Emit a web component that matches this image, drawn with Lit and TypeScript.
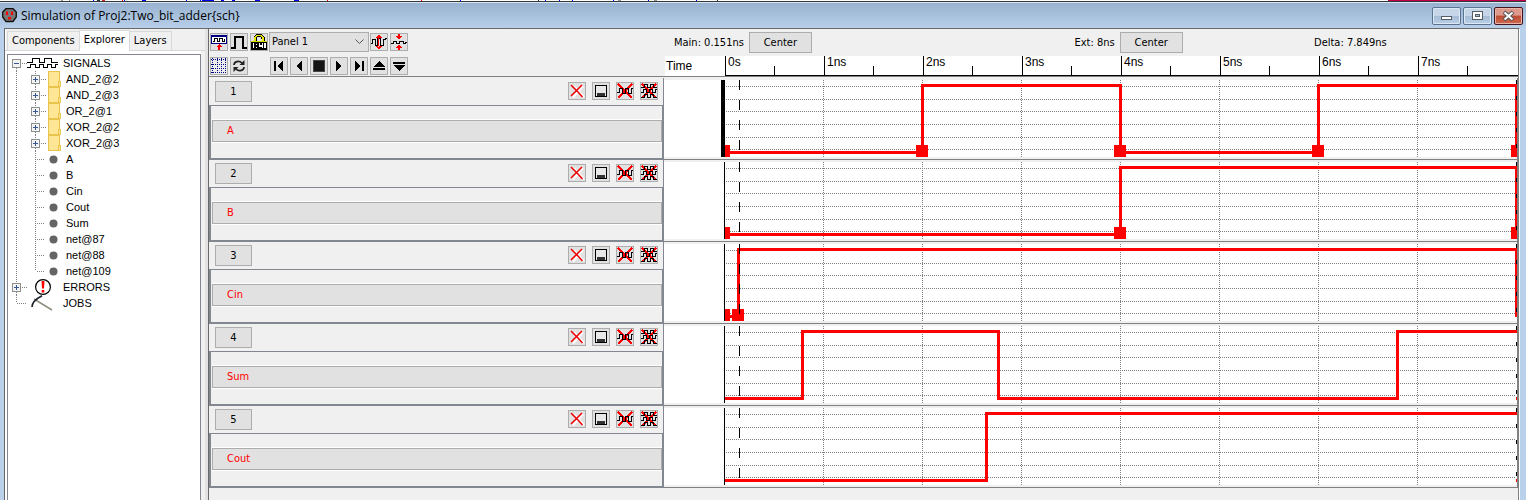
import { LitElement, html, svg, css, nothing, TemplateResult } from "lit";
import { customElement, property, state } from "lit/decorators.js";

const NS = 99;
const AXIS = 60;
const HIGH = 5.5;
const LOW = 72.5;

interface Signal {
  name: string;
  start: 0 | 1;
  edges: number[];
  handles: boolean;
  endEdge: boolean;
}

const SIGNALS: Signal[] = [
  { name: "A", start: 0, edges: [2, 4, 6], handles: true, endEdge: true },
  { name: "B", start: 0, edges: [4], handles: true, endEdge: true },
  { name: "Cin", start: 0, edges: [0.14], handles: true, endEdge: true },
  { name: "Sum", start: 0, edges: [0.79, 2.77, 6.8], handles: false, endEdge: false },
  { name: "Cout", start: 0, edges: [2.65], handles: false, endEdge: false },
];

const at = (t: number) => AXIS + Math.round(t * NS);

/* ---------- 16x16 toolbar glyphs ---------- */
const wave = "M0 9.5H2.5V5.5H5.5V10.5H8.5V5.5H11.5V10.5H14.5V5.5H16";
const glyphs: Record<string, TemplateResult> = {
  addSignal: svg`<rect x=".5" y="1.5" width="15" height="8" fill="#fff" stroke="#000080"/><path d="M1 2.500H15" stroke="#000080"/><path d="M2 7.500H3.500V4.500H6.500V7.500H8.500V4.500H11.500V7.500H13.500V4.500" fill="none" stroke="#000"/><path d="M8 10L11 13H9V16H7V13H5Z" fill="#f00"/>`,
  pulse: svg`<path d="M0 14H4V3H12V14H16" fill="none" stroke="#000" stroke-width="2"/>`,
  lock: svg`<path d="M4 8V4L6 1.500H10L12 4V8" fill="none" stroke="#000" stroke-width="3"/><path d="M4 7V4L6 1.500H10L12 4V7" fill="none" stroke="#e8e800" stroke-width="1.500"/><rect x="0" y="7" width="16" height="9" fill="#000"/><path d="M2.500 9V14M5.500 9.500V10.500M5.500 12.500V13.500M8.500 9V12H11M11.500 9V14M14 9V14" stroke="#fff" stroke-width="1.200" fill="none"/><path d="M0 7.500H16" stroke="#d8d800"/>`,
  expand: svg`<path d="M0 9.500H1.500V5.500H4.500V11.500H6.500V4.500H9.500V11.500H12.500V5.500H14.500V4.500H16" fill="none" stroke="#000"/><path d="M8 0L11 4H5ZM8 16L11 12H5ZM7 3H8V13H7Z" fill="#f00"/>`,
  shrink: svg`<path d="M0 9.500H2.500V7.500H5.500V9.500H8.500V7.500H12.500V9.500H14.500V8.500H16" fill="none" stroke="#000"/><path d="M7 0H9V2H11L8 5.500L5 2H7ZM8 10.500L11 14H9V16H7V14H5Z" fill="#f00"/>`,
  grid: svg`<rect x="0" y="0" width="16" height="16" fill="#fff" fill-opacity=".4"/><path d="M0 1.500H16M0 6.500H16M0 10.500H16M0 14.500H16M1.500 0V16M6.500 0V16M10.500 0V16M14.500 0V16" stroke="#000080" stroke-dasharray="1 1"/>`,
  refresh: svg`<path d="M3 7C3 3.500 8 2 11 5M13 9C13 12.500 8 14 5 11" fill="none" stroke="#222" stroke-width="1.700"/><path d="M13.500 2V7H8.500ZM2.500 14V9H7.500Z" fill="#222"/>`,
  first: svg`<rect x="3" y="3" width="2" height="10"/><path d="M12 3V13L6 8Z"/>`,
  back: svg`<path d="M11 3V13L5 8Z"/>`,
  stop: svg`<rect x="2.500" y="2.500" width="11" height="11" fill="#151515" stroke="#444"/>`,
  play: svg`<path d="M5 3V13L11 8Z"/>`,
  last: svg`<rect x="11" y="3" width="2" height="10"/><path d="M4 3V13L10 8Z"/>`,
  faster: svg`<path d="M8 3L14 9H2Z"/><rect x="2" y="10" width="12" height="2"/>`,
  slower: svg`<path d="M8 13L14 7H2Z"/><rect x="2" y="4" width="12" height="2"/>`,
  close: svg`<path d="M5 3.500L15 14M14 3L4 14.500" stroke="#fff" stroke-width="2"/><path d="M2 2L9 9L13.500 14M13 2L8 7L2 13" stroke="#e00" stroke-width="1.500" fill="none"/>`,
  minimize: svg`<rect x="2.500" y="2.500" width="11" height="11" fill="#e8e8e8" stroke="#000"/><rect x="4" y="10" width="8" height="3" fill="#333"/>`,
  remove: svg`<path d="M1 1L15 15M15 1L1 15" stroke="#f00" stroke-width="1.800"/><path d="${wave}" fill="none" stroke="#000"/>`,
  removeAll: svg`<path d="M1 1L15 15M15 1L1 15" stroke="#f00" stroke-width="2"/><path d="M0 4.500H3.500V1.500H6.500V4.500H9.500V1.500H12.500V4.500H16M0 9.500H2.500V6.500H5.500V9.500H8.500V6.500H11.500V9.500H14.500V6.500H16M0 14.500H3.500V11.500H6.500V14.500H9.500V11.500H12.500V14.500H16" fill="none" stroke="#000"/>`,
};

const smooth = new Set(["refresh", "close"]);
const glyph = (name: string) => html`<svg
  class="glyph"
  width="16"
  height="16"
  viewBox="0 0 16 16"
  shape-rendering=${smooth.has(name) ? "auto" : "crispEdges"}
  aria-hidden="true"
>${glyphs[name]}</svg>`;

const buttonStyles = css`
  button,
  select {
    box-sizing: border-box;
    margin: 0;
    padding: 0;
    font: inherit;
    color: #000;
    background: #e1e1e1;
    border: 1px solid #adadad;
    border-radius: 0;
  }
  .icon {
    width: 18px;
    height: 18px;
    flex: none;
    overflow: hidden;
  }
  .glyph {
    display: block;
  }
`;

/* ---------- explorer tree ---------- */
type Kind = "group" | "leaf" | "errors" | "jobs" | "signals";
interface Node {
  label: string;
  kind: Kind;
  last?: boolean;
}
const TREE: Node[] = [
  { label: "SIGNALS", kind: "signals" },
  ...["AND_2@2", "AND_2@3", "OR_2@1", "XOR_2@2", "XOR_2@3"].map((label) => ({ label, kind: "group" as Kind })),
  ...["A", "B", "Cin", "Cout", "Sum", "net@87", "net@88", "net@109"].map((label, i) => ({
    label,
    kind: "leaf" as Kind,
    last: i === 7,
  })),
  { label: "ERRORS", kind: "errors" },
  { label: "JOBS", kind: "jobs" },
];

@customElement("signal-explorer")
export class SignalExplorer extends LitElement {
  static styles = [
    buttonStyles,
    css`
      :host {
        display: flex;
        flex-direction: column;
        font: 11px/14px "DejaVu Sans Condensed", "Noto Sans", sans-serif;
        background: #f0f0f0;
      }
      .tabs {
        display: flex;
        align-items: flex-end;
        height: 22px;
        padding-left: 2px;
        border-bottom: 1px solid #d9d9d9;
        box-sizing: border-box;
      }
      .tab {
        height: 19px;
        border-color: #d9d9d9;
        border-bottom: 0;
        background: #f0f0f0;
        padding: 0 4px;
        white-space: nowrap;
      }
      .tab:first-child {
        border-right: 0;
      }
      .tab:last-child {
        border-left: 0;
      }
      .tab.active {
        height: 21px;
        margin-bottom: -1px;
        padding-bottom: 2px;
        background: #fff;
        z-index: 1;
      }
      .pane {
        flex: 1;
        display: flex;
        background: #fff;
        padding: 3px 0 0 2px;
        margin-right: 4px;
      }
      .tree {
        flex: 1;
        margin: 0;
        padding: 0;
        list-style: none;
        border: 1px solid #828790;
        border-bottom: 0;
        font: 11px/16px "Liberation Sans", Arial, sans-serif;
      }
      .row {
        display: flex;
        height: 16px;
      }
      .toggle {
        width: 9px;
        height: 16px;
        border: 0;
        background: none;
      }
      svg {
        display: block;
        flex: none;
      }
      .label {
        padding-left: 5px;
        white-space: nowrap;
      }
    `,
  ];

  private toggle(open: boolean, above: boolean) {
    return html`<button class="toggle" aria-label=${open ? "Collapse" : "Expand"}>
      <svg width="9" height="16" shape-rendering="crispEdges">
        ${above ? svg`<path d="M4.500 0V4" stroke="#808080" stroke-dasharray="1 1" />` : nothing}
        ${open || above ? svg`<path d="M4.500 13V16" stroke="#808080" stroke-dasharray="1 1" />` : nothing}
        <rect x=".5" y="4.500" width="8" height="8" fill="#f4f4f4" stroke="#8e8f8f" />
        <path d=${open ? "M2 8.500H7" : "M2 8.500H7M4.500 6V11"} stroke="#3a5795" />
      </svg>
    </button>`;
  }

  private row(n: Node) {
    const dots = (d: string) => svg`<path d="${d}" stroke="#808080" stroke-dasharray="1 1" fill="none"/>`;
    switch (n.kind) {
      case "signals":
        return html`<svg width="4" height="16"></svg>${this.toggle(true, false)}
          <svg width="37" height="16" shape-rendering="crispEdges">
            ${dots("M1 8.500H6")}
            <path d="M6 7.500H11.500V3.500H18.500V7.500H23.500V3.500H30.500V7.500H37M6 12.500H9.500V9.500H14.500V12.500H18.500V9.500H22.500V12.500H26.500V9.500H30.500V12.500H34.500V9.500H37" fill="none" stroke="#000" />
          </svg>`;
      case "group":
        return html`<svg width="23" height="16" shape-rendering="crispEdges">${dots("M8.500 0V16")}</svg
          >${this.toggle(false, true)}
          <svg width="21" height="16" shape-rendering="crispEdges">
            ${dots("M1 8.500H6")}
            <rect x="8.500" y=".5" width="11" height="15" fill="#ffe694" stroke="#e8c44c" />
            <path d="M18.500 10.500H20.500V15.500H18.500Z" fill="#ffe694" stroke="#e8c44c" />
          </svg>`;
      case "leaf":
        return html`<svg width="53" height="16">
          ${dots(n.last ? "M27.500 0V8" : "M27.500 0V16")}${dots("M8.500 0V16")}${dots("M29 8.500H37")}
          <circle cx="45.500" cy="8.500" r="4" fill="#646464" />
        </svg>`;
      case "errors":
        return html`<svg width="4" height="16"></svg>${this.toggle(false, true)}
          <svg width="37" height="16">
            ${dots("M1 8.500H6")}
            <circle cx="22" cy="8" r="7.400" fill="#fff" stroke="#000" stroke-width="1.200" />
            <path d="M20.500 2H23.500L23 9.500H21ZM20.700 11H23.300V13.500H20.700Z" fill="#f00" />
          </svg>`;
      default:
        return html`<svg width="50" height="16">
          ${dots("M8.500 0V8")}${dots("M9 8.500H19")}
          <path d="M26 4L44 15" stroke="#8f8f80" stroke-width="1.500" />
          <path d="M24 12Q24 6 34 .8" fill="none" stroke="#18202a" stroke-width="1.600" />
        </svg>`;
    }
  }

  render() {
    return html`<div class="tabs" role="tablist">
        <button class="tab" role="tab" aria-selected="false">Components</button>
        <button class="tab active" role="tab" aria-selected="true">Explorer</button>
        <button class="tab" role="tab" aria-selected="false">Layers</button>
      </div>
      <div class="pane">
        <ul class="tree">
          ${TREE.map((n) => html`<li class="row">${this.row(n)}<span class="label">${n.label}</span></li>`)}
        </ul>
      </div>`;
  }
}

/* ---------- one waveform panel ---------- */
@customElement("wave-panel")
export class WavePanel extends LitElement {
  @property({ type: Number }) index = 1;
  @property({ attribute: false }) signal!: Signal;

  static styles = [
    buttonStyles,
    css`
      :host {
        display: grid;
        grid-template-columns: 455px 1fr;
        height: 82px;
        box-sizing: border-box;
        font: 11px/14px "DejaVu Sans Condensed", "Noto Sans", sans-serif;
      }
      .side {
        display: flex;
        flex-direction: column;
        border-right: 1px solid #828790;
      }
      .head {
        display: flex;
        gap: 6px;
        height: 27px;
        padding: 3px 5px 0 6px;
        box-sizing: border-box;
      }
      .number {
        width: 37px;
        height: 21px;
        margin-right: auto;
      }
      .head .icon {
        margin-top: 1px;
      }
      .body {
        flex: 1;
        padding: 14px 0 0 1px;
        border: 1px solid #828790;
        border-width: 1px 1px 2px 2px;
      }
      .name {
        display: block;
        width: 100%;
        height: 22px;
        padding: 0 14px;
        text-align: left;
        color: #f00;
        box-shadow: 0 -1px #fff, 0 1px #fff;
      }
      .plot {
        padding: 2px 0;
        border-bottom: 1px solid #808080;
        border-right: 1px solid #808080;
        min-width: 0;
        overflow: hidden;
      }
      .plot svg {
        display: block;
        width: 100%;
        height: 77px;
        background: #fff;
      }
    `,
  ];

  private trace() {
    const s = this.signal;
    let level = s.start;
    let d = `M${AXIS + 1} ${level ? HIGH : LOW}`;
    for (const t of s.edges) {
      const x = at(t) + 0.5;
      level = level ? 0 : 1;
      d += `H${x}V${level ? HIGH : LOW}`;
    }
    return d + `H${at(8) + 0.5}` + (s.endEdge ? `V${LOW}` : "");
  }

  render() {
    const s = this.signal;
    return html`<div class="side">
        <div class="head">
          <button class="number">${this.index}</button>
          <button class="icon" aria-label="Close panel">${glyph("close")}</button>
          <button class="icon" aria-label="Minimize panel">${glyph("minimize")}</button>
          <button class="icon" aria-label="Remove signal">${glyph("remove")}</button>
          <button class="icon" aria-label="Remove all signals">${glyph("removeAll")}</button>
        </div>
        <div class="body"><button class="name">${s.name}</button></div>
      </div>
      <div class="plot">
        <svg shape-rendering="crispEdges" role="img" aria-label="Waveform of ${s.name}">
          <g stroke="#808080" stroke-dasharray="1 1">
            ${[6, 19, 31, 44, 57, 69].map((y) => svg`<path d="M${AXIS + 2} ${y + 0.5}H${at(8)}"/>`)}
            ${[1, 2, 3, 4, 5, 6, 7].map((t) => svg`<path d="M${at(t) + 0.5} 0V77"/>`)}
          </g>
          <rect
            x=${this.index === 1 ? AXIS - 3 : AXIS}
            y="0"
            width=${this.index === 1 ? 4 : 1}
            height="77"
          />
          <path d=${this.trace()} fill="none" stroke="#f00" stroke-width="3" stroke-linejoin="round" />
          ${s.handles
            ? svg`<rect x="${AXIS + 1}" y="65" width="5" height="12" fill="#f00"/>
              ${s.edges.map((t) => svg`<rect x="${at(t) - 6}" y="65" width="12" height="12" fill="#f00"/>`)}
              ${this.index < 3 ? svg`<rect x="${at(8) - 5}" y="65" width="7" height="12" fill="#f00"/>` : nothing}`
            : svg`<rect x="${at(8)}" y="71" width="1" height="3" fill="#f00"/>`}
          <path d="M${at(0.151) + 0.5} 0V75" stroke="#000" stroke-dasharray="10 10" />
          <path d="M${at(8) + 0.5} 0V77" stroke="#000" stroke-dasharray="4 12" />
        </svg>
      </div>`;
  }
}

/* ---------- application window ---------- */
@customElement("app-root")
export class AppRoot extends LitElement {
  @state() private panel = "Panel 1";

  static styles = [
    buttonStyles,
    css`
      :host {
        display: flex;
        flex-direction: column;
        height: 100vh;
        overflow: hidden;
        background: #b9d1ea;
        color: #000;
        font: 11px/14px "DejaVu Sans Condensed", "Noto Sans", sans-serif;
      }
      .edge {
        display: block;
        width: 100%;
        height: 3px;
        flex: none;
      }
      .titlebar {
        display: flex;
        align-items: center;
        flex: none;
        height: 25px;
        padding: 0 3px 0 2px;
        background: linear-gradient(#98b2d0, #b7cfe9);
      }
      .title {
        margin: 0 auto 0 4px;
        font: 12px/16px "Open Sans", "Noto Sans", sans-serif;
        white-space: nowrap;
      }
      .winbuttons {
        display: flex;
        gap: 2px;
      }
      .win {
        width: 29px;
        height: 18px;
        border: 1px solid #5b7391;
        border-radius: 2px;
        background: linear-gradient(#c6d6e8 50%, #a6bcd6 50%, #b9cfe6);
        box-shadow: inset 0 0 0 1px #dce8f4;
      }
      .win.close {
        border-color: #43141c;
        background: linear-gradient(#dd9a8c 45%, #bd4b35 50%, #cf6a4c);
        box-shadow: inset 0 0 0 1px #e8b4a8;
      }
      .win svg {
        display: block;
        margin: auto;
      }
      .frame {
        display: grid;
        grid-template-columns: 204px 1fr;
        flex: 1;
        min-height: 0;
        margin: 0 6px 0 4px;
        border-top: 1px solid #696969;
        border-right: 1px solid #fff;
        background: #f0f0f0;
      }
      .left {
        border-left: 1px solid #696969;
        border-right: 3px solid #e3e3e3;
        box-shadow: inset 1px 0 #fff;
      }
      .main {
        min-width: 0;
        border-left: 1px solid #696969;
        border-right: 1px solid #808080;
      }
      .header {
        display: grid;
        grid-template-columns: 456px 1fr;
        border-bottom: 1px solid #808080;
      }
      .tools {
        display: flex;
        flex-direction: column;
        gap: 4px;
        padding: 3px 0 0 1px;
      }
      .bar {
        display: flex;
        align-items: center;
        gap: 2px;
        height: 20px;
      }
      .skip {
        margin-left: 20px;
      }
      .picker {
        display: grid;
        margin: 0 -1px;
      }
      .picker select,
      .picker svg {
        grid-area: 1 / 1;
      }
      .picker select {
        appearance: none;
        width: 100px;
        height: 20px;
        padding: 0 2px;
      }
      .picker svg {
        justify-self: end;
        align-self: center;
        margin-right: 5px;
        pointer-events: none;
      }
      .status {
        display: flex;
        align-items: center;
        height: 27px;
        padding-left: 9px;
        box-sizing: border-box;
        white-space: nowrap;
      }
      .status button {
        width: 63px;
        height: 21px;
        margin-left: 5px;
      }
      .wide {
        flex: 2;
      }
      .narrow {
        flex: 1;
      }
      .ruler {
        display: grid;
        grid-template-columns: 60px 1fr;
        height: 20px;
        background: #fff;
        font: 12px/14px "Liberation Sans", Arial, sans-serif;
      }
      .time {
        padding: 3px 0 0 1px;
      }
      .scale {
        display: flex;
        overflow: hidden;
        border-bottom: 1px solid #000;
      }
      .ns {
        flex: none;
        display: flex;
        justify-content: space-between;
        width: 99px;
        box-sizing: border-box;
        border-left: 1px solid #000;
        padding-left: 2px;
        line-height: 13px;
      }
      .half {
        width: 50px;
        height: 9px;
        align-self: flex-end;
        box-sizing: border-box;
        border-left: 1px solid #000;
      }
      .panels {
        padding-top: 1px;
      }
    `,
  ];

  private tool(name: string, label: string, cls = "") {
    return html`<button class="icon ${cls}" aria-label=${label}>${glyph(name)}</button>`;
  }

  render() {
    const marks: [number, number, string][] = [
      [61, 2, "#999"], [69, 1, "#999"], [93, 1, "#00f"], [97, 3, "#333"], [102, 3, "#d22"], [122, 1, "#f00"],
      [124, 1, "#00f"], [142, 4, "#00f"], [186, 1, "#00f"], [200, 1, "#00f"], [202, 12, "#00f"], [221, 3, "#00f"],
      [232, 3, "#00f"], [255, 5, "#00f"], [294, 5, "#00f"], [327, 1, "#f00"], [421, 1, "#f00"], [460, 1, "#00f"],
      [538, 1, "#333"], [545, 1, "#00f"], [559, 1, "#00f"], [572, 1, "#00f"], [613, 1, "#00f"], [618, 3, "#999"],
      [648, 1, "#00f"], [654, 3, "#999"], [696, 1, "#00f"], [717, 1, "#333"], [1388, 140, "#c0004e"],
    ];
    return html`
      <svg class="edge" shape-rendering="crispEdges" aria-hidden="true">
        <rect width="100%" height="3" fill="#fff" />
        ${marks.map(([x, w, c]) => svg`<rect x="${x}" width="${w}" height="1" fill="${c}"/>`)}
        <rect y="1" width="100%" height="1" fill="#303838" />
        <rect y="2" width="100%" height="1" fill="#dce6f0" />
      </svg>
      <header class="titlebar">
        <svg width="15" height="15" viewBox="0 0 15 15" aria-hidden="true">
          <path d="M4 .7H11L14.300 4V9L11 13.500H4L.7 9V4Z" fill="#777" stroke="#111" stroke-width="1.300" />
          <path d="M4 3.500H6V7H4ZM9 3.500H11V7H9ZM6 9H9V11.500H6Z" fill="#f00" />
        </svg>
        <span class="title">Simulation of Proj2:Two_bit_adder{sch}</span>
        <div class="winbuttons">
          <button class="win" aria-label="Minimize">
            <svg width="13" height="12"><rect x="1.500" y="6.500" width="10" height="3" fill="#fff" stroke="#555c66" /></svg>
          </button>
          <button class="win" aria-label="Maximize">
            <svg width="13" height="12"><rect x="1.500" y="1.500" width="10" height="8" fill="#fff" stroke="#555c66" /><rect x="4.500" y="4.500" width="4" height="2" fill="#a9bdd5" stroke="#555c66" /></svg>
          </button>
          <button class="win close" aria-label="Close">
            <svg width="13" height="12"><path d="M2 2L11 10M11 2L2 10" stroke="#52545c" stroke-width="4" /><path d="M2.500 2.500L10.500 9.500M10.500 2.500L2.500 9.500" stroke="#fff" stroke-width="2" /></svg>
          </button>
        </div>
      </header>
      <div class="frame">
        <signal-explorer class="left"></signal-explorer>
        <main class="main">
          <div class="header">
            <div class="tools">
              <div class="bar">
                ${this.tool("addSignal", "Add signal")} ${this.tool("pulse", "Digital panel")}
                ${this.tool("lock", "Lock time")}
                <div class="picker">
                  <select
                    aria-label="Panel"
                    .value=${this.panel}
                    @change=${(e: Event) => (this.panel = (e.target as HTMLSelectElement).value)}
                  >
                    ${SIGNALS.map((_, i) => html`<option>Panel ${i + 1}</option>`)}
                  </select>
                  <svg width="9" height="6" aria-hidden="true">
                    <path d="M.5 .5L4.500 4.500L8.500 .5" fill="none" stroke="#555" />
                  </svg>
                </div>
                ${this.tool("expand", "Grow panels")} ${this.tool("shrink", "Shrink panels")}
              </div>
              <div class="bar">
                ${this.tool("grid", "Toggle grid")} ${this.tool("refresh", "Refresh")}
                ${this.tool("first", "Rewind", "skip")} ${this.tool("back", "Play backwards")}
                ${this.tool("stop", "Stop")} ${this.tool("play", "Play")} ${this.tool("last", "To end")}
                ${this.tool("faster", "Faster")} ${this.tool("slower", "Slower")}
              </div>
            </div>
            <div>
              <div class="status">
                <span>Main: 0.151ns</span><button>Center</button>
                <span class="wide"></span>
                <span>Ext: 8ns</span><button>Center</button>
                <span class="narrow"></span>
                <span>Delta: 7.849ns</span>
                <span class="narrow"></span>
              </div>
              <div class="ruler">
                <span class="time">Time</span>
                <div class="scale">
                  ${[0, 1, 2, 3, 4, 5, 6, 7].map(
                    (n) => html`<div class="ns"><span>${n ? `${n}ns` : "0s"}</span><i class="half"></i></div>`
                  )}
                </div>
              </div>
            </div>
          </div>
          <div class="panels">
            ${SIGNALS.map((s, i) => html`<wave-panel .index=${i + 1} .signal=${s}></wave-panel>`)}
          </div>
        </main>
      </div>
    `;
  }
}
